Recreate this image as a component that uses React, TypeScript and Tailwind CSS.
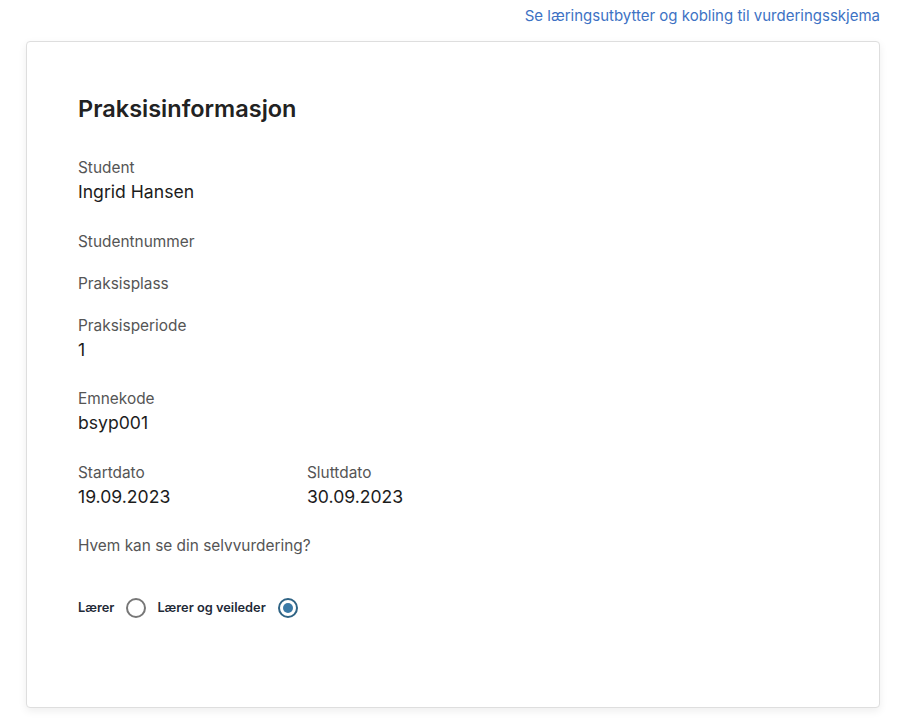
import { useState } from 'react';

type Field = { label: string; value?: string };

const fields: Field[] = [
  { label: 'Student', value: 'Ingrid Hansen' },
  { label: 'Studentnummer' },
  { label: 'Praksisplass' },
  { label: 'Praksisperiode', value: '1' },
  { label: 'Emnekode', value: 'bsyp001' },
];

function InfoField({ label, value }: Field) {
  return (
    <div className={value ? 'mb-[25.5px]' : 'mb-5'}>
      <div className="text-[15.4px] leading-[22px] text-[#555]">{label}</div>
      {value && <div className="text-[17.6px] leading-[26px] text-[#1c1c1c]">{value}</div>}
    </div>
  );
}

function Radio({ label, checked, onClick }: { label: string; checked: boolean; onClick: () => void }) {
  return (
    <label className="flex items-center gap-[12px] cursor-pointer" onClick={onClick}>
      <span className="text-[12.8px] font-semibold text-[#1f2a37]">{label}</span>
      {checked ? (
        <span className="flex h-5 w-5 items-center justify-center rounded-full border-2 border-[#2f6384]">
          <span className="h-[10px] w-[10px] rounded-full bg-[#3a79a6]" />
        </span>
      ) : (
        <span className="h-5 w-5 rounded-full border-2 border-[#777]" />
      )}
    </label>
  );
}

export default function App() {
  const [who, setWho] = useState<'laerer' | 'begge'>('begge');

  return (
    <div className="min-h-[728px] bg-white pl-[26px] pr-5 pt-[5px] font-['Inter',sans-serif]">
      <div className="mb-[14px] text-right text-[15px] leading-[22px]">
        <a href="#" className="text-[#3d72c4]">Se læringsutbytter og kobling til vurderingsskjema</a>
      </div>
      <div className="rounded-[4px] border border-[#dedede] bg-white pb-[87px] pl-[51px] pt-[53px] shadow-[0_3px_8px_rgba(0,0,0,0.07)]">
        <h1 className="mb-[34px] text-[23.5px] font-semibold leading-[28px] text-[#222]">Praksisinformasjon</h1>
        {fields.map((f) => (
          <InfoField key={f.label} {...f} />
        ))}
        <div className="mb-[25.5px] grid grid-cols-[229px_200px]">
          <div>
            <div className="text-[15.4px] leading-[22px] text-[#555]">Startdato</div>
            <div className="text-[17.6px] leading-[26px] text-[#1c1c1c]">19.09.2023</div>
          </div>
          <div>
            <div className="text-[15.4px] leading-[22px] text-[#555]">Sluttdato</div>
            <div className="text-[17.6px] leading-[26px] text-[#1c1c1c]">30.09.2023</div>
          </div>
        </div>
        <div className="mb-[39px] text-[15.4px] leading-[22px] text-[#555]">Hvem kan se din selvvurdering?</div>
        <div className="flex h-6 items-center gap-[11px]">
          <Radio label="Lærer" checked={who === 'laerer'} onClick={() => setWho('laerer')} />
          <Radio label="Lærer og veileder" checked={who === 'begge'} onClick={() => setWho('begge')} />
        </div>
      </div>
    </div>
  );
}
